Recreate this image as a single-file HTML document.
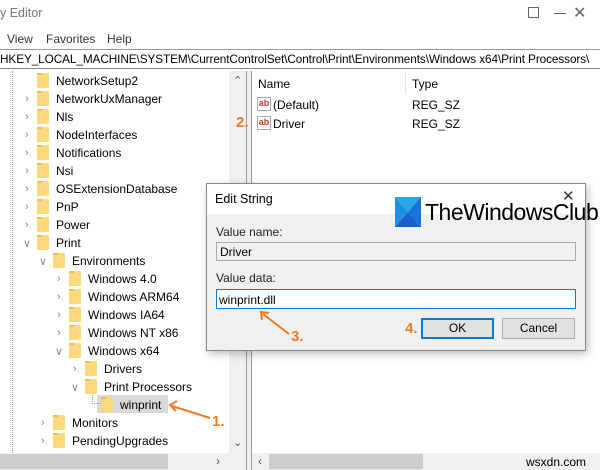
<!DOCTYPE html>
<html><head><style>
*{margin:0;padding:0;box-sizing:border-box}
body{width:600px;height:470px;overflow:hidden;background:#fff;font-family:"Liberation Sans",sans-serif;font-size:12px;color:#000;position:relative}
.a{position:absolute;white-space:nowrap}
.f{position:absolute;width:12px;height:15px;background:#fcd97a;border-radius:1px}
.f:before{content:"";position:absolute;left:0;top:0;width:5px;height:2px;background:#e8c050}
.ch{position:absolute;color:#888;font-size:11px}
.o{color:#f07b22;font-weight:bold;font-size:15px;position:absolute}
</style></head><body>
<div class="a" style="left:0;top:6px;font-size:12.5px;color:#777">y Editor</div>
<div class="a" style="left:554px;top:13px;width:12px;height:1px;background:#666"></div>
<div class="a" style="left:528px;top:7px;width:11px;height:11px;border:1px solid #666"></div>
<div class="a" style="left:573px;top:3px;color:#666;font-size:16px">&#x2715;</div>
<div class="a" style="left:7px;top:32px;color:#333">View</div>
<div class="a" style="left:46px;top:32px;color:#333">Favorites</div>
<div class="a" style="left:107px;top:32px;color:#333">Help</div>
<div class="a" style="left:0;top:49px;width:600px;height:20px;border-top:1px solid #999;border-bottom:1px solid #888;background:#fff"></div>
<div class="a" style="left:0;top:52px;font-size:11.8px;letter-spacing:-0.1px">HKEY_LOCAL_MACHINE\SYSTEM\CurrentControlSet\Control\Print\Environments\Windows x64\Print Processors\</div>
<div class="a" style="left:229px;top:71px;width:17px;height:382px;background:#f0f0f0"></div>
<div class="a" style="left:233px;top:74px;color:#555;font-size:11px">&#x2303;</div>
<div class="a" style="left:233px;top:436px;color:#555;font-size:11px">&#x2304;</div>
<div class="a" style="left:246px;top:71px;width:6px;height:399px;border-left:1px solid #999;border-right:1px solid #999;background:#f0f0f0"></div>
<div class="a" style="left:0;top:453px;width:246px;height:17px;background:#f0f0f0"></div>
<div class="a" style="left:0;top:454px;width:168px;height:15px;background:#cdcdcd"></div>
<div class="a" style="left:216px;top:454px;color:#555">&#x203A;</div>
<div class="a" style="left:252px;top:453px;width:348px;height:17px;background:#f0f0f0"></div>
<div class="a" style="left:258px;top:454px;color:#555">&#x2039;</div>
<div class="a" style="left:269px;top:454px;width:154px;height:15px;background:#cdcdcd"></div>
<div class="a" style="left:526px;top:455px;font-size:12px">wsxdn.com</div>
<div class="a" style="left:12px;top:71px;height:382px;border-left:1px dotted #999"></div>
<div class="a" style="left:97px;top:395px;width:71px;height:18px;background:#d9d9d9"></div>
<div id="tree"></div>
<script>
var rows=[["NetworkSetup2",1,""],["NetworkUxManager",1,">"],["Nls",1,">"],["NodeInterfaces",1,">"],["Notifications",1,">"],["Nsi",1,">"],["OSExtensionDatabase",1,">"],["PnP",1,">"],["Power",1,">"],["Print",1,"v"],["Environments",2,"v"],["Windows 4.0",3,">"],["Windows ARM64",3,">"],["Windows IA64",3,">"],["Windows NT x86",3,">"],["Windows x64",3,"v"],["Drivers",4,">"],["Print Processors",4,"v"],["winprint",5,""],["Monitors",2,">"],["PendingUpgrades",2,">"]];
var h="";
rows.forEach(function(r,i){var y=71+i*18;var fx=37+16*(r[1]-1);var cx=fx-12;
if(r[2]==">")h+='<div class="ch" style="left:'+cx+'px;top:'+(y+4)+'px">&#x203A;</div>';
if(r[2]=="v")h+='<div class="ch" style="left:'+(cx-2)+'px;top:'+(y+4)+'px">&#x2228;</div>';
h+='<div class="f" style="left:'+fx+'px;top:'+(y+2)+'px"></div>';
h+='<div class="a" style="left:'+(fx+19)+'px;top:'+(y+3)+'px;z-index:2">'+r[0]+'</div>';});
h+='<div class="a" style="left:92px;top:395px;width:9px;height:9px;border-left:1px dotted #999;border-bottom:1px dotted #999"></div>';
document.getElementById("tree").innerHTML=h;
</script>
<div class="a" style="left:258px;top:77px">Name</div>
<div class="a" style="left:405px;top:72px;height:22px;border-left:1px solid #e5e5e5"></div>
<div class="a" style="left:412px;top:77px">Type</div>
<div class="a" style="left:257px;top:97px;width:14px;height:14px;border:1px solid #aaa;color:#c0392b;font-size:9px;font-weight:bold;line-height:11px;text-align:center">ab</div>
<div class="a" style="left:273px;top:98px">(Default)</div>
<div class="a" style="left:412px;top:98px">REG_SZ</div>
<div class="a" style="left:257px;top:116px;width:14px;height:14px;border:1px solid #aaa;color:#c0392b;font-size:9px;font-weight:bold;line-height:11px;text-align:center">ab</div>
<div class="a" style="left:273px;top:117px">Driver</div>
<div class="a" style="left:412px;top:117px">REG_SZ</div>
<div class="o" style="left:236px;top:114px">2.</div>
<div class="a" style="left:206px;top:183px;width:380px;height:168px;background:#f0f0f0;border:1px solid #888;box-shadow:2px 3px 8px rgba(0,0,0,.25)"></div>
<div class="a" style="left:207px;top:184px;width:378px;height:30px;background:#fff"></div>
<div class="a" style="left:215px;top:192px;font-size:12.5px">Edit String</div>
<div class="a" style="left:562px;top:187px;font-size:15px;color:#333">&#x2715;</div>
<svg class="a" style="left:395px;top:197px" width="26" height="30" viewBox="0 0 26 30"><polygon points="0,0 26,0 13,15" fill="#29a8e8"/><polygon points="0,0 13,15 0,30" fill="#1e90e0"/><polygon points="26,0 26,30 13,15" fill="#1872d8"/><polygon points="0,30 13,15 26,30" fill="#1a5fd0"/></svg>
<div class="a" style="left:425px;top:199px;font-size:23px;letter-spacing:-0.5px">TheWindowsClub</div>
<div class="a" style="left:216px;top:225px;color:#222">Value name:</div>
<div class="a" style="left:216px;top:242px;width:360px;height:19px;background:#f0f0f0;border:1px solid #aaa"></div>
<div class="a" style="left:220px;top:245px">Driver</div>
<div class="a" style="left:216px;top:271px;color:#222">Value data:</div>
<div class="a" style="left:216px;top:289px;width:360px;height:20px;background:#fff;border:1px solid #0a78d7"></div>
<div class="a" style="left:219px;top:293px">winprint.dll</div>
<div class="a" style="left:421px;top:318px;width:73px;height:21px;background:#e1e1e1;border:2px solid #0a78d7;text-align:center;line-height:17px">OK</div>
<div class="a" style="left:502px;top:318px;width:73px;height:21px;background:#e1e1e1;border:1px solid #adadad;text-align:center;line-height:19px">Cancel</div>
<div class="o" style="left:405px;top:320px">4.</div>
<div class="o" style="left:291px;top:328px">3.</div>
<div class="o" style="left:212px;top:413px">1.</div>
<svg class="a" style="left:0;top:0" width="600" height="470"><g stroke="#f07b22" stroke-width="2" fill="none"><line x1="289" y1="334" x2="263" y2="314"/><polyline points="262,320 261,312 269,313"/><line x1="210" y1="418" x2="172" y2="406"/><polyline points="177,401 170,405 176,411"/></g></svg>
</body></html>
